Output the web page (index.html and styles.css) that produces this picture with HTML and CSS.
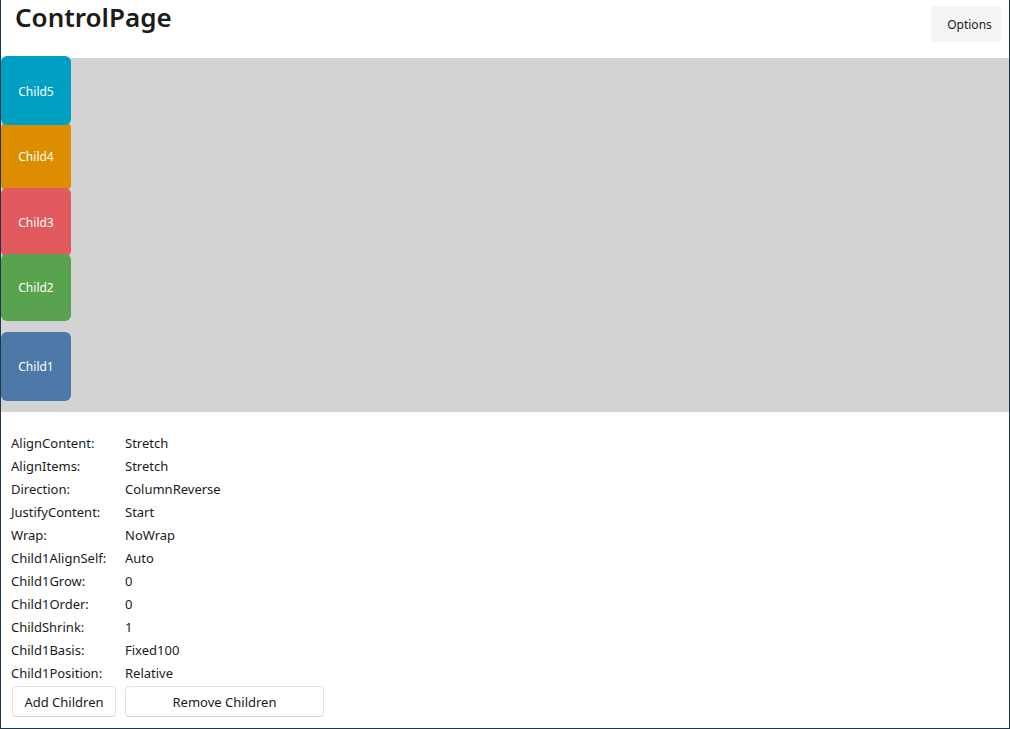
FILE: index.html
```html
<!DOCTYPE html>
<html>
<head>
<meta charset="utf-8">
<link rel="stylesheet" href="styles.css">
</head>
<body>
<div class="window">
  <div class="header">
    <h1 class="title">ControlPage</h1>
    <button class="options">Options</button>
  </div>
  <div class="canvas">
    <div class="stack">
      <div class="child c5">Child5</div>
      <div class="child c4">Child4</div>
      <div class="child c3">Child3</div>
      <div class="child c2">Child2</div>
      <div class="child c1">Child1</div>
    </div>
  </div>
  <div class="props">
    <div class="grid">
      <span>AlignContent:</span><span>Stretch</span>
      <span>AlignItems:</span><span>Stretch</span>
      <span>Direction:</span><span>ColumnReverse</span>
      <span>JustifyContent:</span><span>Start</span>
      <span>Wrap:</span><span>NoWrap</span>
      <span>Child1AlignSelf:</span><span>Auto</span>
      <span>Child1Grow:</span><span>0</span>
      <span>Child1Order:</span><span>0</span>
      <span>ChildShrink:</span><span>1</span>
      <span>Child1Basis:</span><span>Fixed100</span>
      <span>Child1Position:</span><span>Relative</span>
    </div>
    <div class="buttons">
      <button class="btn add">Add Children</button>
      <button class="btn remove">Remove Children</button>
    </div>
  </div>
</div>
</body>
</html>
```
FILE: styles.css
```css
* { box-sizing: border-box; }
html, body { margin: 0; padding: 0; background: #ffffff; }
body { font-family: "Noto Sans", "Open Sans", sans-serif; color: #1b1b1b; }
.window {
  width: 1010px;
  height: 729px;
  border-left: 1px solid #1d3650;
  border-right: 1px solid #1d3650;
  border-bottom: 1px solid #1d3650;
  background: #ffffff;
  overflow: hidden;
}
.header {
  height: 58px;
  display: flex;
  justify-content: space-between;
  align-items: flex-start;
}
.title {
  margin: 0 0 0 14px;
  font-size: 26px;
  font-weight: 600;
  line-height: 35px;
  color: #1b1b1b;
}
.options {
  margin: 6px 8px 0 0;
  width: 70px;
  height: 36px;
  border: none;
  border-radius: 4px;
  background: #f5f5f5;
  font-family: inherit;
  font-size: 12px;
  color: #1b1b1b;
  padding: 0 0 0 7px;
}
.canvas {
  height: 354px;
  background: #d3d3d3;
}
.stack {
  display: flex;
  flex-direction: column;
  width: 70px;
  transform: translateY(-2px);
}
.child {
  width: 70px;
  height: 69px;
  border-radius: 6px;
  color: #ffffff;
  font-size: 12px;
  display: flex;
  align-items: center;
  justify-content: center;
  margin-bottom: -3px;
}
.c5 { background: #00a0c5; position: relative; z-index: 1; padding-top: 2px; }
.c4 { background: #dc8d00; }
.c3 { background: #e35a5e; }
.c2 { background: #59a24f; height: 67px; }
.c1 { background: #4e78a7; margin-top: 14px; }
.props {
  padding: 19px 0 0 10px;
}
.grid {
  display: grid;
  grid-template-columns: 114px auto;
  grid-auto-rows: 23px;
  font-size: 13px;
  align-items: center;
}
.buttons {
  display: flex;
  gap: 9px;
  margin-top: 2px;
  padding-left: 1px;
}
.btn {
  height: 31px;
  background: #ffffff;
  border: 1px solid #e3e3e3;
  border-bottom-color: #d0d0d0;
  border-radius: 4px;
  font-family: inherit;
  font-size: 13px;
  color: #1b1b1b;
}
.add { width: 104px; }
.remove { width: 199px; }
```
